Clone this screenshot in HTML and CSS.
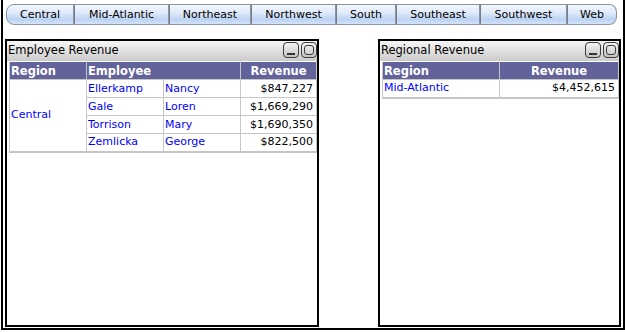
FILE: index.html
```html
<!DOCTYPE html>
<html>

<head>
	<meta http-equiv="Content-Type" content="text/html; charset=UTF-8">
	<title>Revenue Dashboard</title>
	<link rel="stylesheet" href="styles.css">
</head>

<body>
	<div class="frame">
		<div class="tabs">
			<a class="tab first">Central</a>
			<a class="tab">Mid-Atlantic</a>
			<a class="tab">Northeast</a>
			<a class="tab">Northwest</a>
			<a class="tab">South</a>
			<a class="tab">Southeast</a>
			<a class="tab">Southwest</a>
			<a class="tab last">Web</a>
		</div>

		<div class="panels">
			<div class="panel panel-left">
				<div class="titlebar">
					<span class="title">Employee Revenue</span>
					<span class="btns">
						<span class="wbtn wmin"><i></i></span>
						<span class="wbtn wmax"><i></i></span>
					</span>
				</div>
				<table class="grid">
					<tr>
						<th class="c-region">Region</th>
						<th colspan="2">Employee</th>
						<th class="num-head c-rev">Revenue</th>
					</tr>
					<tr>
						<td rowspan="4" class="link">Central</td>
						<td class="link c-last">Ellerkamp</td>
						<td class="link">Nancy</td>
						<td class="num">$847,227</td>
					</tr>
					<tr>
						<td class="link">Gale</td>
						<td class="link">Loren</td>
						<td class="num">$1,669,290</td>
					</tr>
					<tr>
						<td class="link">Torrison</td>
						<td class="link">Mary</td>
						<td class="num">$1,690,350</td>
					</tr>
					<tr>
						<td class="link">Zemlicka</td>
						<td class="link">George</td>
						<td class="num">$822,500</td>
					</tr>
				</table>
			</div>

			<div class="panel panel-right">
				<div class="titlebar">
					<span class="title">Regional Revenue</span>
					<span class="btns">
						<span class="wbtn wmin"><i></i></span>
						<span class="wbtn wmax"><i></i></span>
					</span>
				</div>
				<table class="grid">
					<tr>
						<th class="c-region2">Region</th>
						<th class="num-head">Revenue</th>
					</tr>
					<tr>
						<td class="link">Mid-Atlantic</td>
						<td class="num">$4,452,615</td>
					</tr>
				</table>
			</div>
		</div>
	</div>
</body>

</html>
```

FILE: styles.css
```css
* {
	margin: 0;
	padding: 0;
	box-sizing: border-box;
}

body {
	background: #fff;
	font-family: "DejaVu Sans", Verdana, sans-serif;
	font-size: 11px;
	color: #000;
}

/* outer frame, top edge runs off the window */
.frame {
	width: 624px;
	height: 330px;
	margin-left: 1px;
	border: 2px solid #000;
	border-top: none;
}

.tabs {
	display: grid;
	grid-template-columns: 68px 95px 82px 85px 60px 84px 87px 50px;
	padding: 4px 0 0 3px;
	height: 39px;
	align-items: start;
}

.tab {
	display: block;
	height: 21px;
	line-height: 19px;
	text-align: center;
	border: 1px solid #8a96a8;
	border-left: 1px solid #7c7c84;
	background: linear-gradient(#f4f7fd 0%, #dde8f9 45%, #bcd2f3 75%, #d4e2f8 100%);
	color: #000;
	cursor: pointer;
}

.tab.first {
	border-left: 1px solid #8a96a8;
	border-radius: 8px 0 0 8px;
}

.tab.last {
	border-right: 1px solid #8a96a8;
	border-radius: 0 8px 8px 0;
}

.panels {
	display: flex;
	padding-left: 2px;
	gap: 59px;
}

.panel {
	height: 288px;
	border: 2px solid #000;
	background: #fff;
}

.panel-left {
	width: 314px;
}

.panel-right {
	width: 243px;
}

.titlebar {
	display: flex;
	justify-content: space-between;
	align-items: flex-start;
	height: 20px;
	background: linear-gradient(#f6f6f6, #cbcbcb);
	padding-left: 1px;
}

.title {
	font-size: 11.5px;
	line-height: 16px;
	padding-top: 1px;
}

.btns {
	display: flex;
	gap: 2px;
	padding-top: 1px;
}

.wbtn {
	position: relative;
	width: 16px;
	height: 16px;
	border: 1px solid #3c3c3c;
	border-radius: 4px;
	background: linear-gradient(#f4f4f4, #c4c4c4);
}

.wbtn i {
	position: absolute;
	display: block;
}

.wmin i {
	left: 3px;
	right: 3px;
	bottom: 2px;
	height: 2px;
	background: #333;
}

.wmax i {
	left: 2px;
	right: 2px;
	top: 2px;
	bottom: 2px;
	border: 1px solid #3c3c3c;
	border-radius: 3px;
}

.grid {
	border-collapse: collapse;
	width: calc(100% - 2px);
	margin-left: 2px;
	border-left: 1px solid #c6c6c6;
	border-bottom: 2px solid #c6c6c6;
}

.grid th,
.grid td {
	height: 18px;
	padding: 0 1px;
	border: 1px solid #c6c6c6;
	white-space: nowrap;
	text-align: left;
	line-height: 16px;
}

.grid th {
	background: #63639c;
	color: #fff;
	font-weight: bold;
	font-size: 11.5px;
	border-top-color: #fff;
}

.grid .num-head {
	text-align: center;
}

.grid td.num {
	text-align: right;
	padding-right: 3px;
}

.grid td.link {
	color: #0000ff;
	cursor: pointer;
}

.c-region {
	width: 77px;
}

.c-last {
	width: 77px;
}

.c-rev {
	width: 76px;
}

.c-region2 {
	width: 117px;
}
```
